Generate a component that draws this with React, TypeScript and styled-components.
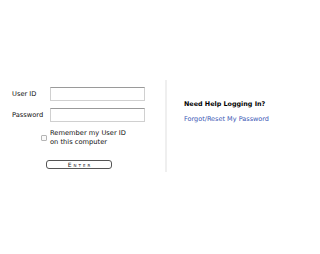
import React from 'react';
import styled, { createGlobalStyle } from 'styled-components';

// Page-wide defaults: no body margin, white page, Verdana-like sans.
const GlobalStyle = createGlobalStyle`
  body {
    margin: 0;
    background: #ffffff;
    font-family: "DejaVu Sans", Verdana, sans-serif;
    color: #111;
  }
`;

// Two panes side by side, the login form and the help box.
const Page = styled.div`
  display: flex;
  padding-top: 80px;
`;

const LoginPane = styled.form`
  width: 165px;
  box-sizing: border-box;
  padding: 7px 0 0 12px;
`;

// Label column and field column.
const FieldGrid = styled.div`
  display: grid;
  grid-template-columns: 38px 95px;
  row-gap: 7px;
  align-items: center;
`;

const Label = styled.label`
  font-size: 6.7px;
  color: #111;
`;

const TextInput = styled.input`
  box-sizing: border-box;
  width: 95px;
  height: 14px;
  margin: 0;
  padding: 0 2px;
  border: 1px solid #d0d0d0;
  border-top-color: #9a9a9a;
  background: #fff;
  font-size: 7px;
  outline: none;
`;

const CheckCell = styled.div`
  justify-self: end;
  align-self: start;
  padding: 6px 3px 0 0;
`;

const CheckBox = styled.input`
  appearance: none;
  display: block;
  width: 6px;
  height: 6px;
  margin: 0;
  border: 1px solid #b5b5b5;
  border-radius: 1px;
  background: #fafafa;
`;

const RememberText = styled.label`
  font-size: 6.7px;
  line-height: 9px;
  color: #111;
`;

const EnterButton = styled.button`
  grid-column: 1 / -1;
  justify-self: start;
  margin: 6px 0 0 34px;
  width: 66px;
  height: 9px;
  padding: 0 0 0 2px;
  border: 1px solid #555;
  border-radius: 3px;
  background: #fff;
  font-family: "DejaVu Sans", Verdana, sans-serif;
  font-size: 6px;
  line-height: 7px;
  letter-spacing: 2px;
  font-variant: small-caps;
  color: #222;
`;

// Help pane with its faint left rule.
const HelpPane = styled.div`
  border-left: 2px solid #efefef;
  height: 92px;
  box-sizing: border-box;
  padding: 20px 0 0 17px;
`;

const HelpTitle = styled.div`
  font-size: 6.4px;
  font-weight: bold;
  color: #000;
  line-height: 9px;
`;

const HelpLink = styled.a`
  display: block;
  margin-top: 6px;
  font-size: 6.5px;
  line-height: 9px;
  color: #3a55b4;
  text-decoration: none;
`;

const App: React.FC = () => {
  return (
    <>
      <GlobalStyle />
      <Page>
        <LoginPane onSubmit={(e) => e.preventDefault()}>
          <FieldGrid>
            <Label htmlFor="userid">User ID</Label>
            <TextInput id="userid" type="text" />
            <Label htmlFor="password">Password</Label>
            <TextInput id="password" type="password" />
            <CheckCell>
              <CheckBox id="remember" type="checkbox" />
            </CheckCell>
            <RememberText htmlFor="remember">
              Remember my User ID
              <br />
              on this computer
            </RememberText>
            <EnterButton type="submit">Enter</EnterButton>
          </FieldGrid>
        </LoginPane>
        <HelpPane>
          <HelpTitle>Need Help Logging In?</HelpTitle>
          <HelpLink href="#">Forgot/Reset My Password</HelpLink>
        </HelpPane>
      </Page>
    </>
  );
};

export default App;
